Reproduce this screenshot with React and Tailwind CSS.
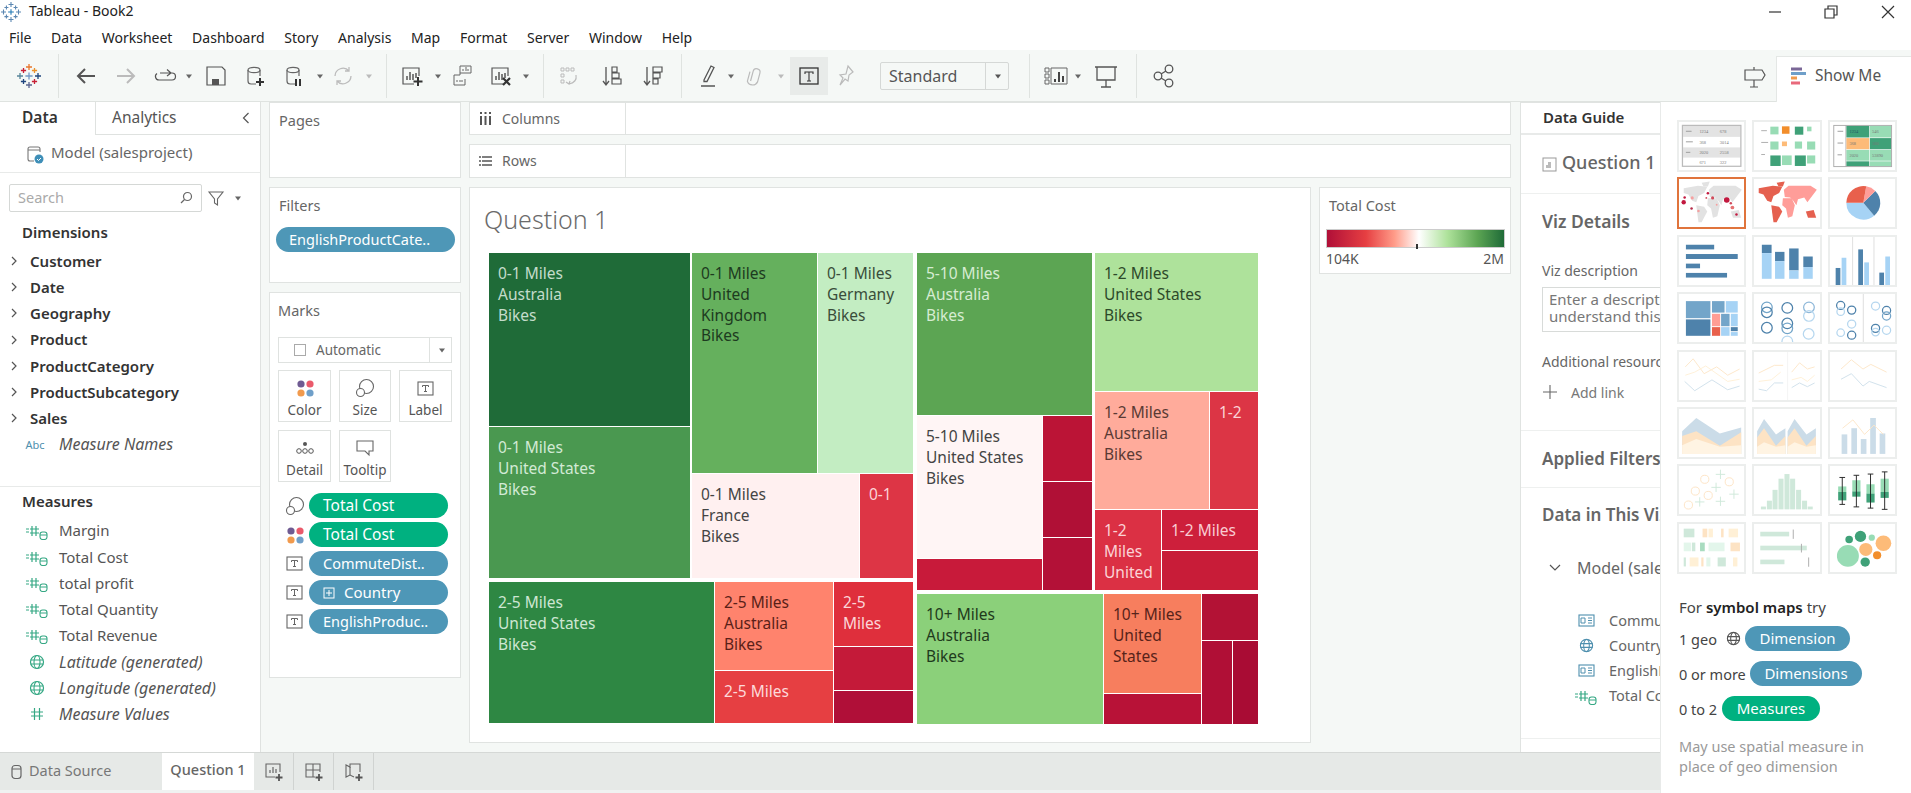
import React from "react";

const S = ({ children, w = 24, h = 24, vb, className = "" }) => (
  <svg width={w} height={h} viewBox={vb || `0 0 ${w} ${h}`} fill="none" className={"shrink-0 " + className}>{children}</svg>
);

const Caret = ({ className = "", c = "#666" }) => (
  <S w={8} h={8} className={className}><path d="M1 2.5h6L4 6.5z" fill={c} /></S>
);
const Sep = ({ className = "" }) => <div className={"w-px h-[44px] bg-[#dfe3e0] shrink-0 " + className} />;

const TabLogo = ({ size = 24, blue = false }) => {
  const marks = blue
    ? [[12, 3, 3, "#5b87b2"], [12, 21, 3, "#5b87b2"], [3, 12, 3, "#5b87b2"], [21, 12, 3, "#5b87b2"], [12, 12, 3.4, "#1f77b4"], [6.5, 6.5, 2.4, "#5b87b2"], [17.5, 6.5, 2.4, "#5b87b2"], [6.5, 17.5, 2.4, "#5b87b2"], [17.5, 17.5, 2.4, "#5b87b2"]]
    : [[12, 3, 3, "#e8762c"], [12, 21, 3, "#5b6591"], [3, 12, 3, "#59879b"], [21, 12, 3, "#1f457e"], [12, 12, 3.6, "#7299c6"], [6.5, 6.5, 2.6, "#c72035"], [17.5, 6.5, 2.6, "#eb912b"], [6.5, 17.5, 2.6, "#1f457e"], [17.5, 17.5, 2.6, "#c72035"]];
  return (
    <S w={size} h={size} vb="0 0 24 24">
      {marks.map(([x, y, r, c], i) => (
        <path key={i} d={`M${x - r} ${y}h${2 * r}M${x} ${y - r}v${2 * r}`} stroke={c} strokeWidth="1.3" />
      ))}
    </S>
  );
};

const Cyl = ({ x = 5, y = 3, c = "#666" }) => (
  <g stroke={c} strokeWidth="1.2">
    <ellipse cx={x + 6} cy={y + 3} rx="6" ry="2.6" />
    <path d={`M${x} ${y + 3}v11a3 3 0 0 0 3 3h5M${x + 12} ${y + 3}v6`} />
  </g>
);
const SheetBars = ({ c = "#555" }) => (
  <g>
    <path d="M14 20H3V4h16v8" stroke={c} strokeWidth="1.2" />
    <path d="M7 16v-4M10 16V8M13 16v-6M16 14V9" stroke={c} strokeWidth="1.5" />
  </g>
);

const Abc = () => <span className="w-[24px] text-[11px] text-[#4e8fae] text-center shrink-0 leading-none">Abc</span>;
const MeasureI = () => (
  <S w={26} h={18}>
    <path d="M2 7h3M2 10h3M8 4v10M12 4v10M6 7h9M6 11h9" stroke="#35a884" strokeWidth="1.2" />
    <rect x="16" y="10" width="7" height="7.5" rx="2.5" stroke="#35a884" strokeWidth="1.1" />
    <path d="M16 13h7" stroke="#35a884" strokeWidth="1" />
  </S>
);
const GlobeI = ({ c = "#35a884", s = 16 }) => (
  <S w={s} h={s} vb="0 0 16 16">
    <circle cx="8" cy="8" r="6.5" stroke={c} strokeWidth="1.2" />
    <ellipse cx="8" cy="8" rx="3" ry="6.5" stroke={c} strokeWidth="1.1" />
    <path d="M1.5 6h13M1.5 10h13" stroke={c} strokeWidth="1.1" />
  </S>
);
const HashI = () => (
  <S w={16} h={16}><path d="M5.5 2v12M10.5 2v12M2 6h12M2 10h12" stroke="#35a884" strokeWidth="1.2" /></S>
);
const TBox = ({ s = 17, c = "#666" }) => (
  <S w={s} h={s} vb="0 0 17 17">
    <rect x="1" y="2" width="15" height="13" stroke={c} strokeWidth="1.1" />
    <path d="M5.5 7V5.5h6V7M8.5 5.5v6M7 11.5h3" stroke={c} strokeWidth="1" />
  </S>
);
const ColorDots = () => (
  <S w={18} h={18}>
    <circle cx="5" cy="5" r="3.6" fill="#6f5b92" /><circle cx="14" cy="5" r="3.6" fill="#ea5a6b" />
    <circle cx="5" cy="14" r="3.6" fill="#f19a4d" /><circle cx="14" cy="14" r="3.6" fill="#6f9fc9" />
  </S>
);
const SizeI = () => (
  <S w={20} h={20}>
    <circle cx="11.5" cy="8.5" r="7" stroke="#666" strokeWidth="1.1" />
    <circle cx="5.5" cy="14.5" r="4" fill="#fff" stroke="#666" strokeWidth="1.1" />
  </S>
);
const TableI = () => (
  <S w={17} h={13}>
    <rect x="1" y="1" width="15" height="11" stroke="#4e8fae" strokeWidth="1.1" />
    <path d="M3 4h4v5H3zM10 4h4M10 6.5h4M10 9h4" stroke="#4e8fae" strokeWidth="1" />
  </S>
);

const Field = ({ icon, children, italic }) => (
  <div className="h-[26.2px] flex items-center">
    <div className="w-[59px] pl-[22px] pr-[7px] flex justify-center shrink-0">{icon}</div>
    <span className={"text-[#555] whitespace-nowrap " + (italic ? "italic text-[16px]" : "text-[15px]")}>{children}</span>
  </div>
);
const Dim = ({ children }) => (
  <div className="h-[26.2px] flex items-center">
    <svg width="8" height="10" viewBox="0 0 8 10" fill="none" className="ml-[10px] mr-[12px] shrink-0"><path d="M2 1l4 4-4 4" stroke="#555" strokeWidth="1.2" /></svg>
    <span className="text-[15px] font-semibold text-[#333] whitespace-nowrap">{children}</span>
  </div>
);

const Pill = ({ children, green, className = "" }) => (
  <div className={"h-[25px] rounded-full flex items-center text-white whitespace-nowrap " + (green ? "bg-[#00b180] " : "bg-[#4e97b7] ") + className}>
    {children}
  </div>
);
const MarkBtn = ({ icon, label, w }) => (
  <div className={"h-[52px] border border-[#dfe2e0] flex flex-col items-center justify-between pt-[7px] pb-[1px] text-[13.5px] text-[#555] " + w}>
    <div className="h-[20px] flex items-center">{icon}</div>
    <span>{label}</span>
  </div>
);

const Cell = ({ className, lines = [] }) => (
  <div className={"overflow-hidden pl-[9px] pt-[10px] text-[15.5px] leading-[20.8px] whitespace-nowrap shrink-0 " + className}>
    {lines.map((l, i) => <div key={i}>{l}</div>)}
  </div>
);

const Treemap = () => (
  <div className="flex gap-[4px] ml-[19px] mt-[15px]">
    <div className="flex flex-col gap-[4px] w-[424px]">
      <div className="flex gap-[2px] h-[325px]">
        <div className="flex flex-col gap-[1px] w-[201px]">
          <Cell className="h-[173px] bg-[#1f6b38] text-[#c4dccb]" lines={["0-1 Miles", "Australia", "Bikes"]} />
          <Cell className="h-[151px] bg-[#4a9850] text-[#d2ead5]" lines={["0-1 Miles", "United States", "Bikes"]} />
        </div>
        <div className="flex flex-col gap-[1px] w-[221px]">
          <div className="flex gap-[1px] h-[220px]">
            <Cell className="w-[125px] bg-[#65b05d] text-[#1d3b1f]" lines={["0-1 Miles", "United", "Kingdom", "Bikes"]} />
            <Cell className="w-[95px] bg-[#c3edc2] text-[#3a4d3a]" lines={["0-1 Miles", "Germany", "Bikes"]} />
          </div>
          <div className="flex gap-[1px] h-[104px]">
            <Cell className="w-[167px] bg-[#fff0f0] text-[#444]" lines={["0-1 Miles", "France", "Bikes"]} />
            <Cell className="w-[53px] bg-[#dd3545] text-[#fbd3d6]" lines={["0-1"]} />
          </div>
        </div>
      </div>
      <div className="flex gap-[1px] h-[141px]">
        <Cell className="w-[225px] bg-[#2e8743] text-[#cde6d2]" lines={["2-5 Miles", "United States", "Bikes"]} />
        <div className="flex flex-col gap-[1px] w-[118px]">
          <Cell className="h-[88px] bg-[#ff836d] text-[#5a1f18]" lines={["2-5 Miles", "Australia", "Bikes"]} />
          <Cell className="h-[52px] bg-[#e63f42] text-[#fdd9d9]" lines={["2-5 Miles"]} />
        </div>
        <div className="flex flex-col gap-[1px] w-[79px]">
          <Cell className="h-[64px] bg-[#df2f3c] text-[#fbd6d8]" lines={["2-5", "Miles"]} />
          <div className="h-[43px] bg-[#c41a39]" />
          <div className="h-[32px] bg-[#b00f38]" />
        </div>
      </div>
    </div>
    <div className="flex flex-col gap-[4px] w-[341px]">
      <div className="flex gap-[3px] h-[337px]">
        <div className="flex flex-col gap-[1px] w-[175px]">
          <Cell className="h-[162px] bg-[#5ca553] text-[#d6ecd2]" lines={["5-10 Miles", "Australia", "Bikes"]} />
          <div className="flex gap-[1px] h-[174px]">
            <div className="flex flex-col gap-[1px] w-[125px]">
              <Cell className="h-[142px] bg-[#fff5f5] text-[#444]" lines={["5-10 Miles", "United States", "Bikes"]} />
              <div className="h-[31px] bg-[#c81a3a]" />
            </div>
            <div className="flex flex-col gap-[1px] w-[49px]">
              <div className="h-[65px] bg-[#bb1436]" />
              <div className="h-[55px] bg-[#b01036]" />
              <div className="h-[52px] bg-[#b31137]" />
            </div>
          </div>
        </div>
        <div className="flex flex-col gap-[1px] w-[163px]">
          <Cell className="h-[138px] bg-[#aee29b] text-[#2d4a2a]" lines={["1-2 Miles", "United States", "Bikes"]} />
          <div className="flex gap-[1px] h-[117px]">
            <Cell className="w-[114px] bg-[#ffab9b] text-[#5a3a34]" lines={["1-2 Miles", "Australia", "Bikes"]} />
            <Cell className="w-[48px] bg-[#dc3545] text-[#fbd3d6]" lines={["1-2"]} />
          </div>
          <div className="flex gap-[1px] h-[80px]">
            <Cell className="w-[66px] bg-[#db3044] text-[#fbd3d6]" lines={["1-2", "Miles", "United"]} />
            <div className="flex flex-col gap-[1px] w-[96px]">
              <Cell className="h-[40px] bg-[#cd1f3b] text-[#f9ccd2]" lines={["1-2 Miles"]} />
              <div className="h-[39px] bg-[#c81c38]" />
            </div>
          </div>
        </div>
      </div>
      <div className="flex gap-[1px] h-[130px]">
        <Cell className="w-[186px] bg-[#8bd07a] text-[#1f3a1c]" lines={["10+ Miles", "Australia", "Bikes"]} />
        <div className="flex flex-col gap-[1px] w-[97px]">
          <Cell className="h-[99px] bg-[#f77e5e] text-[#57231a]" lines={["10+ Miles", "United", "States"]} />
          <div className="h-[30px] bg-[#b81237]" />
        </div>
        <div className="flex flex-col gap-[1px] w-[56px]">
          <div className="h-[46px] bg-[#b31235]" />
          <div className="flex gap-[1px] h-[83px]">
            <div className="w-[30px] bg-[#b00f36]" />
            <div className="w-[25px] bg-[#a90c34]" />
          </div>
        </div>
      </div>
    </div>
  </div>
);

const DK = "#4e82ab", MD = "#73a5c9", LT = "#a6d3f5", PL = "#b6d7ef", GD = "#3fa178", GL = "#98dcb5", OR = "#f28e2b", OL = "#fdbb78";
const R = ({ x1, x2, y1, y2, c }) => <rect x={x1} y={y1} width={x2 - x1} height={y2 - y1} fill={c} />;
const Line = ({ p, c, w = 3 }) => <polyline points={p} fill="none" stroke={c} strokeWidth={w} />;
const Circ = ({ x, y, r, c, w = 4 }) => <circle cx={x} cy={y} r={r} fill="none" stroke={c} strokeWidth={w} />;

const World = ({ a, b }) => (
  <g>
    <path d="M15 30L60 22 90 25 80 45 62 55 55 75 42 70 30 50 15 45Z" fill={a} />
    <path d="M72 12L98 8 92 24 78 24Z" fill={a} />
    <path d="M55 85L80 90 90 105 72 140 62 140 58 110Z" fill={a} />
    <path d="M95 35L110 22 180 22 200 35 185 55 170 75 160 60 140 65 135 85 125 70 115 60 98 58Z" fill={b} />
    <path d="M92 62L120 62 130 85 122 120 108 125 102 95 90 85Z" fill={b} />
    <path d="M165 105L190 100 198 125 172 125Z" fill={a === b ? b : a} />
  </g>
);

const Thumb = ({ vb, children, sel }) => (
  <div className={"h-[52px] bg-white overflow-hidden " + (sel ? "border-2 border-[#e0743c]" : "border-2 border-[#eceeed]")}>
    <svg viewBox={vb} preserveAspectRatio="none" className="w-full h-full block">{children}</svg>
  </div>
);
const TT = ({ x, y, t, c = "#777" }) => <text x={x} y={y} fontSize="14" fill={c} fontFamily="Liberation Serif">{t}</text>;

const Thumbs = () => (
  <div className="grid grid-cols-3 gap-x-[6px] gap-y-[5.4px] w-[220px]">
    <Thumb vb="50 60 208 155">
      <R x1={63} x2={245} y1={73} y2={108} c="#e3e3e3" /><R x1={63} x2={245} y1={142} y2={175} c="#e3e3e3" />
      <rect x="61" y="71" width="186" height="132" fill="none" stroke="#bbb" strokeWidth="4" />
      <path d="M72 90h18M72 124h22M72 158h14" stroke="#999" strokeWidth="3" />
      <TT x={115} y={96} t="1234" /><TT x={180} y={96} t="678" /><TT x={115} y={130} t="368" /><TT x={180} y={130} t="3014" /><TT x={115} y={164} t="2020" /><TT x={180} y={164} t="2558" /><TT x={115} y={196} t="671" /><TT x={180} y={196} t="322" />
    </Thumb>
    <Thumb vb="275 60 208 155">
      <path d="M298 88h18M298 126h22M298 165h12" stroke="#aaa" strokeWidth="3" />
      <R x1={327} x2={353} y1={75} y2={100} c={GL} /><R x1={364} x2={388} y1={74} y2={98} c={OR} /><R x1={405} x2={432} y1={75} y2={101} c={GD} /><R x1={444} x2={458} y1={75} y2={90} c={GL} />
      <R x1={327} x2={353} y1={123} y2={149} c={GL} /><R x1={364} x2={380} y1={123} y2={138} c={OL} /><R x1={405} x2={428} y1={123} y2={146} c={GL} /><R x1={444} x2={470} y1={123} y2={149} c={GL} />
      <R x1={327} x2={360} y1={168} y2={202} c={GD} /><R x1={364} x2={395} y1={168} y2={199} c={GL} /><R x1={405} x2={440} y1={168} y2={202} c={GD} /><R x1={444} x2={470} y1={168} y2={194} c={GL} />
    </Thumb>
    <Thumb vb="500 60 208 155">
      <R x1={552} x2={625} y1={72} y2={110} c={GD} /><R x1={627} x2={695} y1={72} y2={110} c={GL} />
      <R x1={552} x2={625} y1={112} y2={148} c={OL} /><R x1={627} x2={695} y1={112} y2={148} c={GD} />
      <R x1={552} x2={625} y1={150} y2={185} c={GL} /><R x1={627} x2={695} y1={150} y2={185} c={GL} />
      <R x1={552} x2={625} y1={187} y2={203} c={GD} /><R x1={627} x2={695} y1={187} y2={203} c={GL} />
      <rect x="512" y="71" width="184" height="133" fill="none" stroke="#aaa" strokeWidth="3" />
      <path d="M550 71v133" stroke="#aaa" strokeWidth="2" />
      <path d="M524 90h18M524 128h18M524 166h14" stroke="#999" strokeWidth="3" />
      <TT x={562} y={96} t="1234" c="#256" /><TT x={634} y={96} t="546" /><TT x={562} y={134} t="368" /><TT x={634} y={134} t="380" /><TT x={562} y={172} t="2020" /><TT x={634} y={172} t="53890" />
    </Thumb>
    <Thumb vb="0 0 208 155" sel>
      <World a="#e2e2e2" b="#e2e2e2" />
      <circle cx="15" cy="75" r="7" fill="#c2183f" /><circle cx="18" cy="60" r="4" fill="#c2183f" /><circle cx="42" cy="61" r="5" fill="#f5a0a0" />
      <circle cx="92" cy="46" r="4" fill="#c2183f" /><circle cx="87" cy="61" r="3" fill="#d04a5a" /><circle cx="107" cy="61" r="5" fill="#d04a5a" />
      <circle cx="120" cy="83" r="3" fill="#f5a0a0" /><circle cx="152" cy="68" r="9" fill="#c2183f" /><circle cx="165" cy="78" r="4" fill="#d04a5a" />
      <circle cx="170" cy="92" r="6" fill="#e57373" /><circle cx="183" cy="115" r="4" fill="#c2183f" /><circle cx="40" cy="95" r="4" fill="#b52c4a" /><circle cx="62" cy="103" r="4" fill="#f5a0a0" />
    </Thumb>
    <Thumb vb="0 0 208 155"><World a="#e5604f" b="#ff9d99" /></Thumb>
    <Thumb vb="0 0 208 155">
      <path d="M106 77L140.7 118.4A54 54 0 0 1 52 77Z" fill={LT} />
      <path d="M106 77L144.2 38.8A54 54 0 0 1 140.7 118.4Z" fill={DK} />
      <path d="M106 77L115.4 23.8A54 54 0 0 1 144.2 38.8Z" fill="#ff9d99" />
      <path d="M106 77L52 77A54 54 0 0 1 115.4 23.8Z" fill="#e8604c" />
    </Thumb>
    <Thumb vb="50 405 208 155">
      <R x1={72} x2={162} y1={430} y2={445} c={DK} /><R x1={72} x2={237} y1={460} y2={476} c={DK} /><R x1={72} x2={117} y1={491} y2={506} c={DK} /><R x1={72} x2={203} y1={521} y2={536} c={DK} />
    </Thumb>
    <Thumb vb="275 405 208 155">
      <R x1={300} x2={331} y1={430} y2={457} c={DK} /><R x1={300} x2={331} y1={457} y2={540} c={LT} />
      <R x1={342} x2={372} y1={453} y2={483} c={DK} /><R x1={342} x2={372} y1={483} y2={540} c={LT} />
      <R x1={387} x2={417} y1={442} y2={513} c={DK} /><R x1={387} x2={417} y1={513} y2={540} c={LT} />
      <R x1={432} x2={462} y1={468} y2={502} c={DK} /><R x1={432} x2={462} y1={502} y2={540} c={LT} />
    </Thumb>
    <Thumb vb="500 405 208 155">
      <path d="M572 405v155M640 405v155" stroke="#ccc" strokeWidth="2" />
      <R x1={518} x2={533} y1={505} y2={560} c={DK} /><R x1={537} x2={552} y1={472} y2={560} c={LT} />
      <R x1={590} x2={605} y1={445} y2={560} c={DK} /><R x1={609} x2={624} y1={487} y2={560} c={LT} />
      <R x1={657} x2={672} y1={520} y2={560} c={DK} /><R x1={676} x2={691} y1={468} y2={560} c={LT} />
    </Thumb>
    <Thumb vb="50 577 208 155">
      <R x1={72} x2={150} y1={600} y2={655} c={MD} /><R x1={72} x2={150} y1={659} y2={712} c={DK} /><R x1={155} x2={195} y1={600} y2={637} c={MD} /><R x1={199} x2={237} y1={600} y2={637} c={LT} />
      <R x1={155} x2={181} y1={641} y2={681} c="#ff9d94" /><R x1={155} x2={181} y1={684} y2={712} c="#e8604c" /><R x1={184} x2={211} y1={641} y2={681} c={MD} /><R x1={215} x2={237} y1={641} y2={681} c={LT} />
      <R x1={184} x2={211} y1={684} y2={712} c={LT} /><R x1={215} x2={237} y1={684} y2={697} c={DK} /><R x1={215} x2={237} y1={700} y2={712} c={LT} />
    </Thumb>
    <Thumb vb="275 577 208 155">
      <Circ x={316} y={620} r={17} c={MD} /><Circ x={316} y={636} r={17} c={DK} /><Circ x={381} y={622} r={17} c={DK} /><Circ x={450} y={620} r={17} c="#8fb8d9" /><Circ x={450} y={648} r={17} c={PL} />
      <Circ x={316} y={686} r={17} c={DK} /><Circ x={381} y={672} r={17} c={DK} /><Circ x={381} y={688} r={17} c={MD} /><Circ x={449} y={706} r={17} c={PL} /><Circ x={381} y={730} r={17} c={PL} />
    </Thumb>
    <Thumb vb="500 577 208 155">
      <path d="M606 577v155" stroke="#ccc" strokeWidth="2" />
      <Circ x={534} y={614} r={13} c={DK} /><Circ x={534} y={634} r={12} c={PL} /><Circ x={569} y={629} r={13} c={DK} /><Circ x={534} y={702} r={12} c={PL} /><Circ x={569} y={674} r={13} c={PL} /><Circ x={569} y={710} r={13} c={DK} />
      <Circ x={645} y={616} r={13} c={PL} /><Circ x={680} y={630} r={13} c={DK} /><Circ x={680} y={648} r={13} c={MD} /><Circ x={645} y={688} r={13} c={DK} /><Circ x={645} y={700} r={12} c={PL} /><Circ x={680} y={694} r={13} c={PL} />
    </Thumb>
    <Thumb vb="50 30 208 155">
      <Line p="70,78 95,52 130,100 170,78 205,105 243,85" c="#fde6c8" /><Line p="70,105 100,95 135,75 205,125 243,118" c="#fff0d6" /><Line p="68,125 100,155 155,120 205,152 243,140" c="#cfe0eb" />
    </Thumb>
    <Thumb vb="275 30 208 155">
      <path d="M382 30v155" stroke="#eee" strokeWidth="2" />
      <Line p="290,98 340,73 368,73" c="#fde6c8" /><Line p="290,125 330,120 360,95" c="#fff0d6" /><Line p="290,150 315,155 340,130 368,130" c="#cfe0eb" />
      <Line p="395,95 420,65 445,85 468,78" c="#fde6c8" /><Line p="395,120 425,112 445,125 468,105" c="#fff0d6" /><Line p="395,145 420,130 445,142 468,130" c="#cfe0eb" />
    </Thumb>
    <Thumb vb="500 30 208 155">
      <Line p="535,85 568,55 605,85 630,70 680,95" c="#fde6c8" /><Line p="535,118 568,100 605,140 625,125 680,145" c="#cfe0eb" />
    </Thumb>
    <Thumb vb="50 203 208 155">
      <polygon points="60,275 105,232 180,282 248,263 248,348 60,348" fill="#cbdce8" /><polygon points="60,290 105,275 180,322 248,278 248,348 60,348" fill="#fde3c4" /><polygon points="60,320 105,300 180,325 248,320 248,348 60,348" fill="#fff4e3" />
    </Thumb>
    <Thumb vb="275 203 208 155">
      <polygon points="285,275 307,235 345,285 375,265 375,348 285,348" fill="#cbdce8" /><polygon points="285,295 307,265 345,322 375,290 375,348 285,348" fill="#fde3c4" /><polygon points="285,325 307,310 345,325 375,320 375,348 285,348" fill="#fff4e3" />
      <polygon points="382,275 404,235 442,285 472,265 472,348 382,348" fill="#cbdce8" /><polygon points="382,295 404,265 442,322 472,290 472,348 382,348" fill="#fde3c4" /><polygon points="382,325 404,310 442,325 472,320 472,348 382,348" fill="#fff4e3" />
    </Thumb>
    <Thumb vb="500 203 208 155">
      <R x1={537} x2={555} y1={285} y2={348} c="#cbdce8" /><R x1={568} x2={586} y1={265} y2={348} c="#cbdce8" /><R x1={598} x2={616} y1={300} y2={348} c="#cbdce8" /><R x1={628} x2={646} y1={232} y2={348} c="#cbdce8" /><R x1={658} x2={676} y1={282} y2={348} c="#cbdce8" />
      <Line p="540,265 573,238 610,285 640,255 670,285" c="#fde6c8" />
    </Thumb>
    <Thumb vb="50 376 208 155">
      <Circ x={132} y={419} r={13} c="#fde3c4" w={3} /><Circ x={210} y={427} r={13} c="#fde3c4" w={3} /><Circ x={102} y={457} r={13} c="#fde3c4" w={3} /><Circ x={143} y={471} r={13} c="#fde3c4" w={3} /><Circ x={80} y={502} r={13} c="#fde3c4" w={3} />
      <path d="M182 388v30M167 403h30M168 430v30M153 445h30M225 452v30M210 467h30M116 477v30M101 492h30M182 475v30M167 490h30" stroke="#cfe8da" strokeWidth="3" />
    </Thumb>
    <Thumb vb="275 376 208 155">
      <R x1={297} x2={313} y1={507} y2={516} c="#cfe8da" /><R x1={316} x2={332} y1={488} y2={516} c="#cfe8da" /><R x1={334} x2={350} y1={453} y2={516} c="#cfe8da" /><R x1={353} x2={369} y1={417} y2={516} c="#cfe8da" /><R x1={372} x2={388} y1={402} y2={516} c="#cfe8da" /><R x1={390} x2={406} y1={417} y2={516} c="#cfe8da" /><R x1={409} x2={425} y1={453} y2={516} c="#cfe8da" /><R x1={428} x2={444} y1={488} y2={516} c="#cfe8da" /><R x1={446} x2={462} y1={507} y2={516} c="#cfe8da" />
    </Thumb>
    <Thumb vb="500 376 208 155">
      <R x1={526} x2={552} y1={442} y2={460} c={GL} /><R x1={526} x2={552} y1={460} y2={487} c={GD} />
      <R x1={571} x2={597} y1={422} y2={458} c={GL} /><R x1={571} x2={597} y1={458} y2={475} c={GD} />
      <R x1={616} x2={642} y1={435} y2={465} c={GL} /><R x1={616} x2={642} y1={465} y2={494} c={GD} />
      <R x1={661} x2={687} y1={417} y2={460} c={GL} /><R x1={661} x2={687} y1={460} y2={479} c={GD} />
      <path d="M539 413v87M530 413h18M530 500h18M584 406v102M575 406h18M575 508h18M629 402v110M620 402h18M620 512h18M674 395v121M665 395h18M665 516h18" stroke="#222" strokeWidth="3" />
    </Thumb>
    <Thumb vb="50 548 208 155">
      <R x1={65} x2={99} y1={563} y2={591} c="#cfe8da" /><R x1={125} x2={140} y1={563} y2={591} c="#fde3c4" /><R x1={144} x2={158} y1={563} y2={591} c="#fff0d6" /><R x1={184} x2={192} y1={563} y2={591} c="#fde3c4" /><R x1={208} x2={238} y1={563} y2={591} c="#fff0d6" />
      <R x1={65} x2={88} y1={608} y2={636} c="#e3f6eb" /><R x1={91} x2={102} y1={608} y2={636} c="#cfe8da" /><R x1={117} x2={132} y1={608} y2={636} c="#a9dcc0" /><R x1={144} x2={195} y1={608} y2={636} c="#e3f6eb" /><R x1={214} x2={244} y1={608} y2={636} c="#fde3c4" />
      <R x1={65} x2={72} y1={656} y2={685} c="#cfe8da" /><R x1={84} x2={112} y1={656} y2={685} c="#fff0d6" /><R x1={121} x2={128} y1={656} y2={685} c="#fde3c4" /><R x1={137} x2={150} y1={656} y2={685} c="#e3f6eb" /><R x1={173} x2={199} y1={656} y2={685} c="#cfe8da" /><R x1={222} x2={236} y1={656} y2={685} c="#fff0d6" />
    </Thumb>
    <Thumb vb="275 548 208 155">
      <R x1={295} x2={387} y1={573} y2={588} c="#cfe8da" /><R x1={295} x2={443} y1={618} y2={633} c="#cfe8da" /><R x1={295} x2={372} y1={663} y2={678} c="#cfe8da" />
      <path d="M400 566v30M426 612v28M449 656v30" stroke="#aaa" strokeWidth="3" />
    </Thumb>
    <Thumb vb="500 548 208 155">
      <circle cx="557" cy="651" r="35" fill={GL} /><circle cx="614" cy="630" r="21" fill={OL} /><circle cx="670" cy="610" r="25" fill={OL} /><circle cx="650" cy="649" r="13" fill={OR} />
      <circle cx="612" cy="671" r="15" fill={GD} /><circle cx="597" cy="588" r="18" fill={GD} /><circle cx="561" cy="598" r="12" fill={GD} /><circle cx="633" cy="592" r="10" fill={GL} />
    </Thumb>
  </div>
);

export default function App() {
  return (
    <div className="w-full h-[793px] overflow-hidden flex flex-col bg-white font-['Noto_Sans',sans-serif] text-[#333]">
      {/* Title */}
      <div className="h-[24px] flex items-center shrink-0">
        <div className="ml-[1px]"><TabLogo size={20} blue /></div>
        <span className="ml-[8px] text-[14px] text-[#222] pb-[3px]">Tableau - Book2</span>
        <S w={14} h={14} className="ml-auto"><path d="M1 7h12" stroke="#333" strokeWidth="1.2" /></S>
        <S w={14} h={14} className="ml-[42px]"><path d="M1 4h9v9H1zM4 4V1h9v9h-3" stroke="#333" strokeWidth="1.2" /></S>
        <S w={14} h={14} className="ml-[43px] mr-[16px]"><path d="M1 1l12 12M13 1L1 13" stroke="#333" strokeWidth="1.2" /></S>
      </div>
      {/* Menu */}
      <div className="h-[26px] flex items-center shrink-0 pl-[9px] gap-[19.7px] text-[14px] text-[#222]">
        {["File", "Data", "Worksheet", "Dashboard", "Story", "Analysis", "Map", "Format", "Server", "Window", "Help"].map((m) => <span key={m}>{m}</span>)}
      </div>
      {/* Toolbar */}
      <div className="h-[52px] shrink-0 flex items-center bg-[#f5f8f6] border-b border-[#dfe3e0]">
        <div className="ml-[17px]"><TabLogo /></div>
        <Sep className="ml-[17px]" />
        <S className="ml-[15px]"><path d="M21 12H4M11 5l-7 7 7 7" stroke="#555" strokeWidth="2" /></S>
        <S className="ml-[16px]"><path d="M3 12h17M13 5l7 7-7 7" stroke="#bbb" strokeWidth="2" /></S>
        <S className="ml-[15px]"><path d="M7 9H19a3.5 3.5 0 0 1 0 7H6a3.5 3.5 0 0 1-2-6.4M14 5.5l4 3.5-4 3" stroke="#555" strokeWidth="1.2" /></S>
        <Caret className="ml-[8px]" />
        <S className="ml-[11px]"><path d="M3 3h15l3 3v15H3z" stroke="#555" strokeWidth="1.2" /><rect x="8" y="15" width="7" height="6" fill="#555" /></S>
        <S className="ml-[15px]"><Cyl /><path d="M17 14v8M13 18h8" stroke="#333" strokeWidth="2" /></S>
        <S className="ml-[15px]"><Cyl /><path d="M14 15v7M18 15v7" stroke="#333" strokeWidth="2" /></S>
        <Caret className="ml-[10px]" />
        <S className="ml-[7px]"><path d="M4 12a8 8 0 0 1 14-5M20 12a8 8 0 0 1-14 5M18 3v4h-4M6 21v-4h4" stroke="#bbb" strokeWidth="1.3" /></S>
        <Caret className="ml-[10px]" c="#bbb" />
        <Sep className="ml-[13px]" />
        <S className="ml-[13px]"><SheetBars /><path d="M18 13v9M13.5 17.5h9" stroke="#333" strokeWidth="2" /></S>
        <Caret className="ml-[10px]" />
        <S className="ml-[9px]"><path d="M9 9h11V2H9zM9 9v2H3v10h11v-6" stroke="#666" strokeWidth="1" /><path d="M12 7V5M15 7V3M17 7V5M6 18v-2M9 18v-2M11 18v-2" stroke="#666" strokeWidth="1" /></S>
        <S className="ml-[14px]"><SheetBars /><path d="M14 14l7 7M21 14l-7 7" stroke="#333" strokeWidth="2.2" /></S>
        <Caret className="ml-[9px]" />
        <Sep className="ml-[13px]" />
        <S className="ml-[13px]"><path d="M4 4h3v3H4zM9 4h3v3H9zM14 4h3v3h-3zM4 10h3v3H4zM4 16h3v3H4z" stroke="#bbb" strokeWidth="1" /><path d="M19 11c1 5-2 8-7 9M9 18l3 2 1-3" stroke="#bbb" strokeWidth="1.2" /></S>
        <S className="ml-[18px]"><path d="M7 3v18M4 17l3 4 3-4" stroke="#555" strokeWidth="1.3" /><path d="M13 3h5v5h-5zM13 9h7v5h-7zM13 15h9v5h-9z" stroke="#555" strokeWidth="1.2" /></S>
        <S className="ml-[17px]"><path d="M7 3v18M4 17l3 4 3-4" stroke="#555" strokeWidth="1.3" /><path d="M13 3h9v5h-9zM13 9h7v5h-7zM13 15h5v5h-5z" stroke="#555" strokeWidth="1.2" /></S>
        <Sep className="ml-[17px]" />
        <S className="ml-[15px]"><path d="M7 16L14 2l3 1.5-7 14H7zM4 22h14" stroke="#555" strokeWidth="1.3" /></S>
        <Caret className="ml-[6px]" />
        <S className="ml-[8px]"><path d="M9 18V8a3.5 3.5 0 0 1 7 0v9a5.5 5.5 0 0 1-10 2V9" stroke="#bbb" strokeWidth="1.2" transform="rotate(15 12 12)" /></S>
        <Caret className="ml-[10px]" c="#bbb" />
        <div className="ml-[5px] w-[38px] h-[38px] bg-[#e8ebe9] flex items-center justify-center">
          <S w={20} h={20}><rect x="1" y="2" width="18" height="16" stroke="#333" strokeWidth="1.3" /><path d="M6 8V6h8v2M10 6v9M8 15h4" stroke="#333" strokeWidth="1.1" /></S>
        </div>
        <S className="ml-[5px]"><path d="M15 2l5 6-4 3-1 6-3-2-5 6 3-7-3-3 6-1z" stroke="#bbb" strokeWidth="1.2" /></S>
        <div className="ml-[23px] w-[129px] h-[28px] border border-[#d5d8d6] rounded-[2px] flex items-center text-[#555] text-[16px]">
          <span className="w-[105px] pl-[8px] border-r border-[#d5d8d6] leading-[26px] pb-[1px] h-[26px]">Standard</span>
          <Caret className="ml-[8px]" c="#555" />
        </div>
        <Sep className="ml-[20px]" />
        <S className="ml-[14px]"><path d="M1 4h4v4H1zM1 10h4v4H1zM1 16h4v4H1zM7 4h16v16H7z" stroke="#666" strokeWidth="1" /><path d="M11 18v-3M15 18V8M19 18v-6" stroke="#444" strokeWidth="2" /></S>
        <Caret className="ml-[6px]" />
        <S className="ml-[12px]"><path d="M1 3h22M3 3v13h18V3M12 16v7M7 23h10" stroke="#555" strokeWidth="1.3" /></S>
        <Sep className="ml-[18px]" />
        <S className="ml-[15px]"><circle cx="17" cy="5" r="3.8" stroke="#555" strokeWidth="1.3" /><circle cx="6" cy="12" r="3.8" stroke="#555" strokeWidth="1.3" /><circle cx="17" cy="19" r="3.8" stroke="#555" strokeWidth="1.3" /><path d="M9 10l5-3M9 14l5 3" stroke="#555" strokeWidth="1.3" /></S>
        <S className="ml-auto"><path d="M2 6h17l3 5-3 5H2zM11 3v3M11 16v7M7 23h8" stroke="#555" strokeWidth="1.2" /></S>
        <div className="ml-[9px] w-[135px] h-[46px] self-end bg-white border-l border-t border-[#e4e7e5] flex items-center pl-[14px] pb-[8px] -mb-px">
          <S w={16} h={20}><path d="M0 3h11" stroke="#7a6797" strokeWidth="3" /><path d="M0 7.5h15" stroke="#6f9fc9" strokeWidth="3" /><path d="M0 12h6" stroke="#f19a4d" strokeWidth="3" /><path d="M0 17h9" stroke="#e8697b" strokeWidth="3" /></S>
          <span className="ml-[8px] text-[15.5px] text-[#555]">Show Me</span>
        </div>
      </div>
      {/* Body */}
      <div className="flex-1 flex min-h-0">
        <div className="w-[1660px] flex flex-col shrink-0">
          <div className="h-[650px] flex bg-[#f5f8f6] shrink-0">
            {/* Left pane */}
            <div className="w-[261px] bg-white border-r border-[#dfe2e0] shrink-0 flex flex-col">
              <div className="h-[33px] flex shrink-0">
                <div className="w-[96px] pl-[22px] pb-[1px] border-r border-[#dfe2e0] flex items-center font-semibold text-[15.5px] text-[#333]">Data</div>
                <div className="flex-1 border-b border-[#dfe2e0] flex items-center pl-[16px] pb-[1px] text-[15.5px] text-[#555]">
                  Analytics
                  <svg width="8" height="12" viewBox="0 0 8 12" fill="none" className="ml-auto mr-[10px]"><path d="M6.5 1L1.5 6l5 5" stroke="#555" strokeWidth="1.2" /></svg>
                </div>
              </div>
              <div className="h-[38px] border-b border-[#e8eae9] flex items-center pl-[24px] shrink-0">
                <S w={20} h={20}><path d="M4 15V5a2 2 0 0 1 2-2h8a2 2 0 0 1 2 2v3M4 15a2 2 0 0 0 2 2h4" stroke="#777" strokeWidth="1.1" /><path d="M4 6h12" stroke="#777" strokeWidth="1" /><circle cx="15" cy="15" r="4.5" fill="#3f8fb8" /><path d="M13 15l1.5 1.5 2.5-2.5" stroke="#fff" strokeWidth="1" /></S>
                <span className="ml-[7px] text-[15px] text-[#666] pb-[3px]">Model (salesproject)</span>
              </div>
              <div className="mt-[11px] flex items-center pl-[9px] shrink-0">
                <div className="w-[193px] h-[28px] border border-[#d5d8d6] rounded-[2px] flex items-center pl-[8px] pb-[1px] text-[14.5px] text-[#aaa]">
                  Search
                  <S w={14} h={14} className="ml-auto mr-[8px]"><circle cx="8.5" cy="5.5" r="4" stroke="#666" strokeWidth="1.2" /><path d="M5.5 8.5L2 12" stroke="#666" strokeWidth="1.2" /></S>
                </div>
                <S w={18} h={18} className="ml-[5px]"><path d="M2 3h14l-5.5 7v6l-3-2v-4z" stroke="#666" strokeWidth="1.1" /></S>
                <Caret className="ml-[9px]" />
              </div>
              <div className="mt-[7px] h-[26px] pl-[22px] flex items-center font-semibold text-[15px] text-[#333]">Dimensions</div>
              <div className="mt-[3px]">
                {["Customer", "Date", "Geography", "Product", "ProductCategory", "ProductSubcategory", "Sales"].map((d) => <Dim key={d}>{d}</Dim>)}
                <div className="h-[26.2px] flex items-center pl-[23px]"><Abc /><span className="ml-[12px] text-[16px] italic text-[#555] whitespace-nowrap">Measure Names</span></div>
              </div>
              <div className="mt-[28px] border-t border-[#e8eae9] h-[26px] pl-[22px] flex items-center font-semibold text-[15px] text-[#333] box-content pt-[2px]">Measures</div>
              <div className="mt-[3px]">
                <Field icon={<MeasureI />}>Margin</Field>
                <Field icon={<MeasureI />}>Total Cost</Field>
                <Field icon={<MeasureI />}>total profit</Field>
                <Field icon={<MeasureI />}>Total Quantity</Field>
                <Field icon={<MeasureI />}>Total Revenue</Field>
                <Field italic icon={<GlobeI />}>Latitude (generated)</Field>
                <Field italic icon={<GlobeI />}>Longitude (generated)</Field>
                <Field italic icon={<HashI />}>Measure Values</Field>
              </div>
            </div>
            {/* Cards */}
            <div className="w-[192px] ml-[8px] flex flex-col gap-[9px] shrink-0">
              <div className="h-[76px] bg-white border border-[#e0e3e1] pl-[9px] pt-[7px] text-[14.5px] text-[#666]">Pages</div>
              <div className="h-[96px] bg-white border border-[#e0e3e1] px-[6px] pt-[6px]">
                <div className="pl-[3px] text-[14.5px] text-[#666] leading-[22px]">Filters</div>
                <Pill className="mt-[11px] pl-[13px] w-[179px] text-[14.5px]">EnglishProductCate..</Pill>
              </div>
              <div className="h-[386px] bg-white border border-[#e0e3e1] px-[8px] pt-[6px]">
                <div className="text-[14.5px] text-[#666] leading-[22px]">Marks</div>
                <div className="mt-[16px] h-[26px] w-[174px] border border-[#dfe2e0] flex items-center text-[13.5px] text-[#666]">
                  <div className="w-[12px] h-[12px] border border-[#aaa] ml-[15px] shrink-0" />
                  <span className="ml-[10px] w-[113px] leading-[24px] h-[24px] whitespace-nowrap shrink-0">Automatic</span>
                  <div className="w-px h-[24px] bg-[#dfe2e0] shrink-0" />
                  <Caret className="ml-[8px]" />
                </div>
                <div className="mt-[7px] flex gap-[8px]">
                  <MarkBtn w="w-[53px]" icon={<ColorDots />} label="Color" />
                  <MarkBtn w="w-[52px]" icon={<SizeI />} label="Size" />
                  <MarkBtn w="w-[53px]" icon={<TBox />} label="Label" />
                </div>
                <div className="mt-[8px] flex gap-[8px]">
                  <MarkBtn w="w-[53px]" icon={<S w={20} h={16}><circle cx="10" cy="4" r="2" fill="#555" /><circle cx="4" cy="11" r="2.3" stroke="#555" /><circle cx="10" cy="11" r="2.3" stroke="#555" /><circle cx="16" cy="11" r="2.3" stroke="#555" /></S>} label="Detail" />
                  <MarkBtn w="w-[52px]" icon={<S w={20} h={18}><path d="M2 2h16v10h-4v4l-4-4H2z" stroke="#666" strokeWidth="1.1" /></S>} label="Tooltip" />
                </div>
                <div className="mt-[11px] flex flex-col gap-[4px]">
                  <div className="flex items-center"><div className="w-[31px] pl-[7px]"><SizeI /></div><Pill green className="flex-1 mr-[4px] pl-[14px] text-[15.5px]">Total Cost</Pill></div>
                  <div className="flex items-center"><div className="w-[31px] pl-[8px]"><ColorDots /></div><Pill green className="flex-1 mr-[4px] pl-[14px] text-[15.5px]">Total Cost</Pill></div>
                  <div className="flex items-center"><div className="w-[31px] pl-[8px]"><TBox /></div><Pill className="flex-1 mr-[4px] pl-[14px] text-[14.5px]">CommuteDist..</Pill></div>
                  <div className="flex items-center"><div className="w-[31px] pl-[8px]"><TBox /></div><Pill className="flex-1 mr-[4px] pl-[14px] text-[15px]">
                    <S w={12} h={12} className="mr-[9px]"><rect x="1" y="1" width="10" height="10" stroke="#fff" /><path d="M6 3v6M3 6h6" stroke="#fff" /></S>Country</Pill></div>
                  <div className="flex items-center"><div className="w-[31px] pl-[8px]"><TBox /></div><Pill className="flex-1 mr-[4px] pl-[14px] text-[14.5px]">EnglishProduc..</Pill></div>
                </div>
              </div>
            </div>
            {/* Worksheet */}
            <div className="w-[1042px] ml-[8px] flex flex-col gap-[9px] shrink-0">
              <div className="h-[33px] bg-white border border-[#e0e3e1] flex shrink-0">
                <div className="w-[156px] border-r border-[#e0e3e1] flex items-center pl-[9px] pb-[1px] text-[14px] text-[#666]">
                  <S w={13} h={15} className="mr-[10px]"><path d="M2 5v9M6.5 5v9M11 5v9" stroke="#555" strokeWidth="2" /><path d="M2 1v2M6.5 1v2M11 1v2" stroke="#555" strokeWidth="2" /></S>Columns
                </div>
              </div>
              <div className="h-[34px] bg-white border border-[#e0e3e1] flex shrink-0">
                <div className="w-[156px] border-r border-[#e0e3e1] flex items-center pl-[9px] pb-[1px] text-[14px] text-[#666]">
                  <S w={13} h={12} className="mr-[10px]"><path d="M0 2h2M3 2h10M0 6h2M3 6h10M0 10h2M3 10h10" stroke="#555" strokeWidth="1.5" /></S>Rows
                </div>
              </div>
              <div className="flex gap-[8px]">
                <div className="w-[842px] h-[556px] bg-white border border-[#e0e3e1] shrink-0">
                  <div className="pl-[14px] pt-[15px] text-[25px] leading-[32px] font-light text-[#6b6b6b] h-[50px]">Question 1</div>
                  <Treemap />
                </div>
                <div className="w-[192px] h-[87px] bg-white border border-[#e0e3e1] px-[6px] shrink-0">
                  <div className="pl-[3px] pt-[6px] text-[14.5px] leading-[22px] text-[#666]">Total Cost</div>
                  <div className="relative mt-[13px] h-[19px] w-[179px] border border-[#ccc] bg-[linear-gradient(90deg,#b00f38,#e63f42_22%,#ff9b88_38%,#fff_52%,#aee29b_68%,#5ca553_85%,#1f6b38)]">
                    <div className="absolute left-[89px] -bottom-[2px] w-[2px] h-[5px] bg-[#333]" />
                  </div>
                  <div className="flex justify-between text-[14px] leading-[18px] text-[#555] mt-[2px]"><span>104K</span><span>2M</span></div>
                </div>
              </div>
            </div>
            {/* Data guide */}
            <div className="w-[140px] ml-[9px] bg-white border-l border-t border-[#e0e3e1] shrink-0 overflow-hidden whitespace-nowrap flex flex-col">
              <div className="h-[32px] border-b-2 border-[#e8eae9] pl-[22px] pb-[2px] flex items-center font-semibold text-[15px] text-[#333] shrink-0">Data Guide</div>
              <div className="h-[59px] border-b border-[#eef0ef] flex items-center pl-[21px] shrink-0">
                <S w={15} h={15}><rect x="1" y="1" width="13" height="13" stroke="#999" /><path d="M4 11V8h2V5h3v6h2" fill="#bbb" /></S>
                <span className="ml-[5px] text-[18px] font-medium text-[#666] pb-[3px]">Question 1</span>
              </div>
              <div className="h-[237px] border-b border-[#eef0ef] pl-[21px] shrink-0">
                <div className="mt-[15px] text-[17.5px] leading-[24px] font-semibold text-[#666]">Viz Details</div>
                <div className="mt-[28px] text-[14px] leading-[20px] text-[#666]">Viz description</div>
                <div className="mt-[6px] h-[45px] -mr-[40px] border border-[#d8dbd9] pl-[6px] pt-[3px] text-[15px] leading-[17px] text-[#777]">Enter a description<br />understand this viz</div>
                <div className="mt-[20px] text-[14px] leading-[20px] text-[#666]">Additional resources</div>
                <div className="mt-[10px] h-[20px] flex items-center text-[14px] text-[#777]">
                  <S w={14} h={14} className="ml-[1px] mr-[14px]"><path d="M7 0v14M0 7h14" stroke="#666" strokeWidth="1.1" /></S>Add link
                </div>
              </div>
              <div className="h-[57px] border-b border-[#eef0ef] pl-[21px] flex items-center text-[17px] font-semibold text-[#666] shrink-0">Applied Filters</div>
              <div className="h-[251px] border-b border-[#eef0ef] pl-[21px] shrink-0">
                <div className="mt-[15px] text-[17px] leading-[24px] font-semibold text-[#666]">Data in This Viz</div>
                <div className="mt-[31px] flex items-center h-[20px] text-[16px] text-[#666]">
                  <svg width="12" height="8" viewBox="0 0 12 8" fill="none" className="ml-[7px] mr-[16px] shrink-0"><path d="M1 1l5 5 5-5" stroke="#555" strokeWidth="1.2" /></svg>Model (sales
                </div>
                <div className="mt-[30px] text-[14.5px] text-[#666]">
                  <div className="h-[25px] flex items-center"><div className="w-[26px] ml-[31px] flex justify-center shrink-0"><TableI /></div><span className="ml-[10px]">CommuteDist</span></div>
                  <div className="h-[25px] flex items-center"><div className="w-[26px] ml-[31px] flex justify-center shrink-0"><GlobeI c="#4e8fae" s={15} /></div><span className="ml-[10px]">Country</span></div>
                  <div className="h-[25px] flex items-center"><div className="w-[26px] ml-[31px] flex justify-center shrink-0"><TableI /></div><span className="ml-[10px]">EnglishProduct</span></div>
                  <div className="h-[25px] flex items-center"><div className="w-[26px] ml-[31px] flex justify-center shrink-0"><MeasureI /></div><span className="ml-[10px]">Total Cost</span></div>
                </div>
              </div>
            </div>
          </div>
          {/* Tabs */}
          <div className="h-[38px] bg-[#e6e9e7] border-t border-[#d5d8d6] flex items-center shrink-0">
            <S w={14} h={16} className="ml-[10px]"><rect x="2" y="1.5" width="9" height="13" rx="3" stroke="#666" strokeWidth="1.2" /><path d="M2 5h9" stroke="#666" /></S>
            <span className="ml-[5px] w-[133px] text-[14.5px] text-[#777] pb-[2px]">Data Source</span>
            <div className="w-[92px] h-full bg-white flex items-center justify-center pb-[3px] text-[14.5px] font-medium text-[#666]">Question 1</div>
            <div className="w-[40px] h-full border-r border-[#d0d3d1] flex items-center justify-center"><S w={20} h={20}><path d="M11 15H2V2h14v8" stroke="#666" strokeWidth="1.1" /><path d="M6 11V8M9 11V5M12 11V7" stroke="#666" strokeWidth="1.2" /><path d="M15 12v7M11.5 15.5h7" stroke="#555" strokeWidth="1.8" /></S></div>
            <div className="w-[40px] h-full border-r border-[#d0d3d1] flex items-center justify-center"><S w={20} h={20}><path d="M11 15H2V2h14v8M2 8h14M9 2v13" stroke="#666" strokeWidth="1.1" /><path d="M15 12v7M11.5 15.5h7" stroke="#555" strokeWidth="1.8" /></S></div>
            <div className="w-[40px] h-full border-r border-[#d0d3d1] flex items-center justify-center"><S w={20} h={20}><path d="M10 15l-4-2-4 2V3l4 2V2h10v8" stroke="#666" strokeWidth="1.1" /><path d="M6 5v8" stroke="#666" strokeWidth="1.1" /><path d="M15 12v7M11.5 15.5h7" stroke="#555" strokeWidth="1.8" /></S></div>
          </div>
          <div className="flex-1 bg-[#f0f2f1]" />
        </div>
        {/* Show Me */}
        <div className="w-[251px] bg-white border-l border-[#e8eae9] pl-[16px] pt-[18px] shrink-0">
          <Thumbs />
          <div className="pl-[2px]">
            <div className="mt-[23px] text-[15px] leading-[20px] text-[#444] whitespace-nowrap">For <b className="font-semibold text-[#222]">symbol maps</b> try</div>
            <div className="mt-[9px] flex items-center text-[14.5px] text-[#444]">
              <span className="w-[47px] pt-[3px] whitespace-nowrap">1 geo</span>
              <GlobeI c="#555" s={15} />
              <Pill className="ml-[4px] w-[105px] justify-center text-[15px]">Dimension</Pill>
            </div>
            <div className="mt-[10px] flex items-center text-[14.5px] text-[#444]">
              <span className="w-[71px] pt-[3px] whitespace-nowrap">0 or more</span>
              <Pill className="w-[112px] justify-center text-[15px]">Dimensions</Pill>
            </div>
            <div className="mt-[10px] flex items-center text-[14.5px] text-[#444]">
              <span className="w-[43px] pt-[3px] whitespace-nowrap">0 to 2</span>
              <Pill green className="w-[98px] justify-center text-[15px]">Measures</Pill>
            </div>
            <div className="mt-[15px] text-[14.5px] leading-[20px] text-[#999]">May use spatial measure in<br />place of geo dimension</div>
          </div>
        </div>
      </div>
    </div>
  );
}
